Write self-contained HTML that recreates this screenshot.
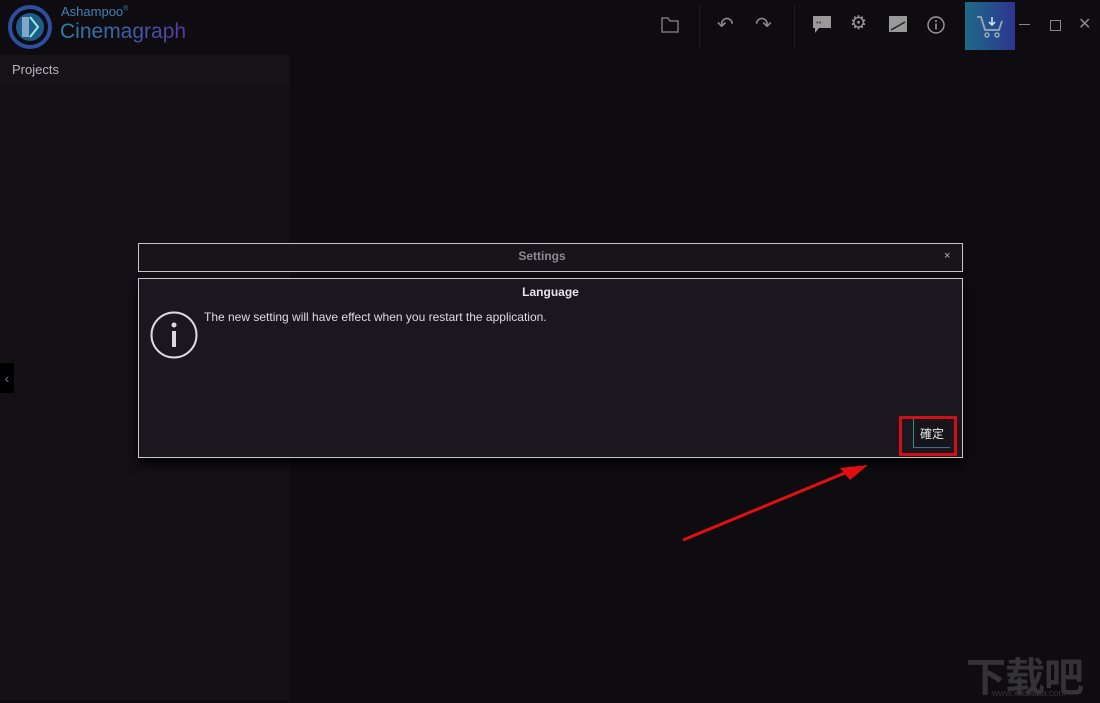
<!DOCTYPE html>
<html><head><meta charset="utf-8"><style>
body{margin:0;width:1100px;height:700px;background:#0e0c10;position:relative;overflow:hidden;font-family:"Liberation Sans","Noto Sans CJK TC",sans-serif;}
.abs{position:absolute}
</style></head><body>
<div class="abs" style="left:0;top:55px;width:290px;height:645px;background:#131116"></div>
<div class="abs" style="left:0;top:55px;width:290px;height:28px;background:#151318"></div>
<div class="abs" style="left:12px;top:62px;color:#b8b5bc;font-size:13px">Projects</div>
<svg class="abs" style="left:6px;top:5px" width="48" height="44" viewBox="0 0 48 44">
<circle cx="24" cy="22" r="20" fill="none" stroke="#2c4fa0" stroke-width="4"/>
<circle cx="24" cy="22" r="14" fill="#1f5c8c"/>
<rect x="16" y="12" width="7" height="20" fill="#7fa8c8"/>
<path d="M24 12 L32 22 L24 32" fill="none" stroke="#9ec" stroke-width="2"/></svg>
<div class="abs" style="left:61px;top:4px;color:#4a7fb0;font-size:13px">Ashampoo<sup style="font-size:7px">®</sup></div>
<div class="abs" style="left:60px;top:20px;font-size:21px;background:linear-gradient(90deg,#2c83a8,#503da0);-webkit-background-clip:text;color:transparent">Cinemagraph</div>
<div class="abs" style="left:699px;top:4px;width:1px;height:44px;background:#1d1b21"></div>
<div class="abs" style="left:794px;top:4px;width:1px;height:44px;background:#1d1b21"></div>
<svg class="abs" style="left:660px;top:16px" width="20" height="18"><path d="M2 2h6l2 3h8v11H2z" fill="none" stroke="#888" stroke-width="1.3"/></svg>
<div class="abs" style="left:717px;top:12px;color:#888;font-size:20px">↶</div>
<div class="abs" style="left:755px;top:12px;color:#888;font-size:20px">↷</div>
<svg class="abs" style="left:813px;top:16px" width="18" height="18"><path d="M0 0h18v12H6l-4 5v-5H0z" fill="#999"/><text x="3" y="10" font-size="7" fill="#222">**</text></svg>
<div class="abs" style="left:850px;top:12px;color:#999;font-size:19px">⚙</div>
<svg class="abs" style="left:889px;top:16px" width="18" height="16"><rect width="18" height="16" fill="#999"/><path d="M2 14L16 6" stroke="#222" stroke-width="1.5"/></svg>
<svg class="abs" style="left:927px;top:16px" width="18" height="18"><circle cx="9" cy="9" r="8" fill="none" stroke="#999" stroke-width="1.4"/><rect x="8.2" y="7.5" width="1.6" height="6" fill="#999"/><circle cx="9" cy="5" r="1" fill="#999"/></svg>
<div class="abs" style="left:965px;top:2px;width:50px;height:48px;background:linear-gradient(90deg,#1e6a86,#2d3590)"></div>
<svg class="abs" style="left:976px;top:14px" width="28" height="26"><path d="M1 3h4l4 13h14l3-9" fill="none" stroke="#9ab" stroke-width="1.8"/><circle cx="11" cy="21" r="2" fill="none" stroke="#9ab" stroke-width="1.5"/><circle cx="21" cy="21" r="2" fill="none" stroke="#9ab" stroke-width="1.5"/><path d="M16 3v8M13 8l3 3 3-3" fill="none" stroke="#cde" stroke-width="1.6"/></svg>
<div class="abs" style="left:1019px;top:24px;width:11px;height:1px;background:#888"></div>
<div class="abs" style="left:1050px;top:20px;width:9px;height:9px;border:1px solid #888"></div>
<div class="abs" style="left:1078px;top:14px;color:#888;font-size:16px">✕</div>
<div class="abs" style="left:0;top:363px;width:14px;height:30px;background:#000;color:#778;font-size:14px;line-height:30px;text-align:center">‹</div>
<div class="abs" style="left:138px;top:243px;width:823px;height:27px;border:1px solid #c8c6cc;background:#17151a"></div>
<div class="abs" style="left:138px;top:249px;width:808px;text-align:center;color:#8c8a90;font-size:12px;font-weight:bold">Settings</div>
<div class="abs" style="left:944px;top:250px;color:#bbb;font-size:11px">×</div>
<div class="abs" style="left:138px;top:278px;width:823px;height:178px;border:1px solid #c8c6cc;background:#1a171f;box-shadow:0 6px 10px #000"></div>
<div class="abs" style="left:138px;top:285px;width:825px;text-align:center;color:#e6e4ea;font-size:12px;font-weight:bold">Language</div>
<svg class="abs" style="left:150px;top:311px" width="50" height="50"><circle cx="24" cy="24" r="22.5" fill="none" stroke="#dcdae0" stroke-width="2"/><circle cx="24" cy="14" r="2.5" fill="#dcdae0"/><rect x="22" y="20" width="4" height="16" fill="#dcdae0"/></svg>
<div class="abs" style="left:204px;top:310px;color:#dedce2;font-size:12px">The new setting will have effect when you restart the application.</div>
<div class="abs" style="left:913px;top:419px;width:36px;height:28px;border-left:1px solid #3a8a90;border-bottom:1px solid #3a6a9a;background:#17151a;color:#e8e8ea;font-size:12px;line-height:30px;text-align:center">確定</div>
<div class="abs" style="left:899px;top:416px;width:52px;height:34px;border:3px solid #d01018"></div>
<svg class="abs" style="left:0;top:0" width="1100" height="700"><path d="M683 540L852 470" stroke="#e01010" stroke-width="3"/><path d="M868 465L840 468L850 480Z" fill="#e01010"/></svg>
<div class="abs" style="left:966px;top:645px;color:#333236;font-size:40px;font-weight:bold;letter-spacing:-1px">下载吧</div>
<div class="abs" style="left:992px;top:688px;color:#333236;font-size:9px">www.xiazaiba.com</div>
</body></html>
